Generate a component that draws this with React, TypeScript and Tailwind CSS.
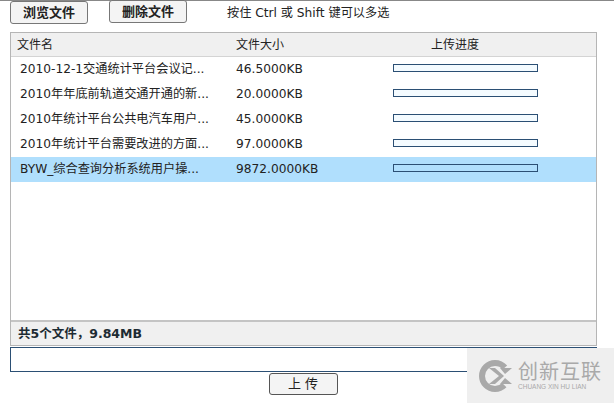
const files = [
  { name: '2010-12-1交通统计平台会议记...', size: '46.5000KB' },
  { name: '2010年年底前轨道交通开通的新...', size: '20.0000KB' },
  { name: '2010年统计平台公共电汽车用户...', size: '45.0000KB' },
  { name: '2010年统计平台需要改进的方面...', size: '97.0000KB' },
  { name: 'BYW_综合查询分析系统用户操...', size: '9872.0000KB', selected: true },
]

const font = "font-['DejaVu_Sans','Noto_Sans_CJK_SC',sans-serif]"

function Logo() {
  return (
    <svg width="34" height="34" viewBox="0 0 34 34" className="shrink-0">
      <circle cx="16" cy="17" r="13" fill="none" stroke="#a9a9a9" strokeWidth="6" strokeDasharray="62 20" strokeDashoffset="-10" />
      <path d="M10 9 L20 17 L10 25 L16 25 L25 17 L16 9 Z" fill="#a9a9a9" />
      <path d="M21 9 L33 9 L26 15 Z M21 25 L33 25 L26 19 Z" fill="#a9a9a9" />
      <path d="M9 14 L13 17 L9 20 Z" fill="#efefef" />
    </svg>
  )
}

export default function App() {
  return (
    <div className={`relative w-[614px] h-[403px] overflow-hidden bg-white text-[#222] ${font}`}>
      <div className="h-px bg-[#888]" />
      <div className="flex items-start h-[31px] pl-2.5">
        <button className="w-[78px] h-[23px] border border-[#777] rounded-[3px] bg-[#f4f4f4] text-[13px] font-bold leading-[21px]">浏览文件</button>
        <button className="w-[78px] h-[23px] ml-[21px] -mt-px border border-[#777] rounded-[3px] bg-[#f4f4f4] text-[13px] font-bold leading-[21px]">删除文件</button>
        <div className="ml-10 mt-[4px] text-[12.2px] leading-[16px] whitespace-nowrap">按住 Ctrl 或 Shift 键可以多选</div>
      </div>

      <div className="ml-2.5 w-[587px] h-[314px] border border-[#b5b5b5] flex flex-col">
        <div className="flex items-center h-[24px] shrink-0 bg-[#f0f0f0] border-b border-[#d4d4d4] text-[12px]">
          <div className="w-[225px] pl-[6px]">文件名</div>
          <div className="w-[195px]">文件大小</div>
          <div>上传进度</div>
        </div>
        <div className="flex-1">
          {files.map((f) => (
            <div key={f.name} className={`flex items-center h-[25px] text-[12.2px] ${f.selected ? 'bg-[#b0dffd]' : ''}`}>
              <div className="w-[225px] pl-[9px] whitespace-nowrap">{f.name}</div>
              <div className="w-[157px] whitespace-nowrap">{f.size}</div>
              <div className={`w-[145px] h-[8px] mb-[4px] border border-[#2b4f74] ${f.selected ? '' : 'bg-[#f4fbff]'}`} />
            </div>
          ))}
        </div>
        <div className="h-[25px] shrink-0 flex items-center pl-[7px] pt-[1px] bg-[#f0f0f0] border-t-2 border-[#c4c4c4] text-[12.5px] font-bold text-[#1d2b33]">
          共5个文件，9.84MB
        </div>
      </div>

      <div className="ml-2.5 mt-px w-[587px] h-[25px] border border-[#2b4f74] bg-white" />

      <div className="flex justify-center pr-[8px] mt-px">
        <button className="w-[69px] h-[22px] border border-[#555] rounded-[3px] bg-[#f4f4f4] text-[13px] leading-[20px]">上 传</button>
      </div>

      <div className="absolute left-[467px] top-[348px] w-[147px] h-[55px] bg-[#efefef] flex items-center pl-[12px] gap-[5px]">
        <Logo />
        <div className="text-[#a9a9a9]">
          <div className="text-[20px] leading-[22px] tracking-[1px] whitespace-nowrap">创新互联</div>
          <div className="text-[6.5px] leading-[8px] font-['Liberation_Sans',sans-serif] whitespace-nowrap">CHUANG XIN HU LIAN</div>
        </div>
      </div>
    </div>
  )
}
